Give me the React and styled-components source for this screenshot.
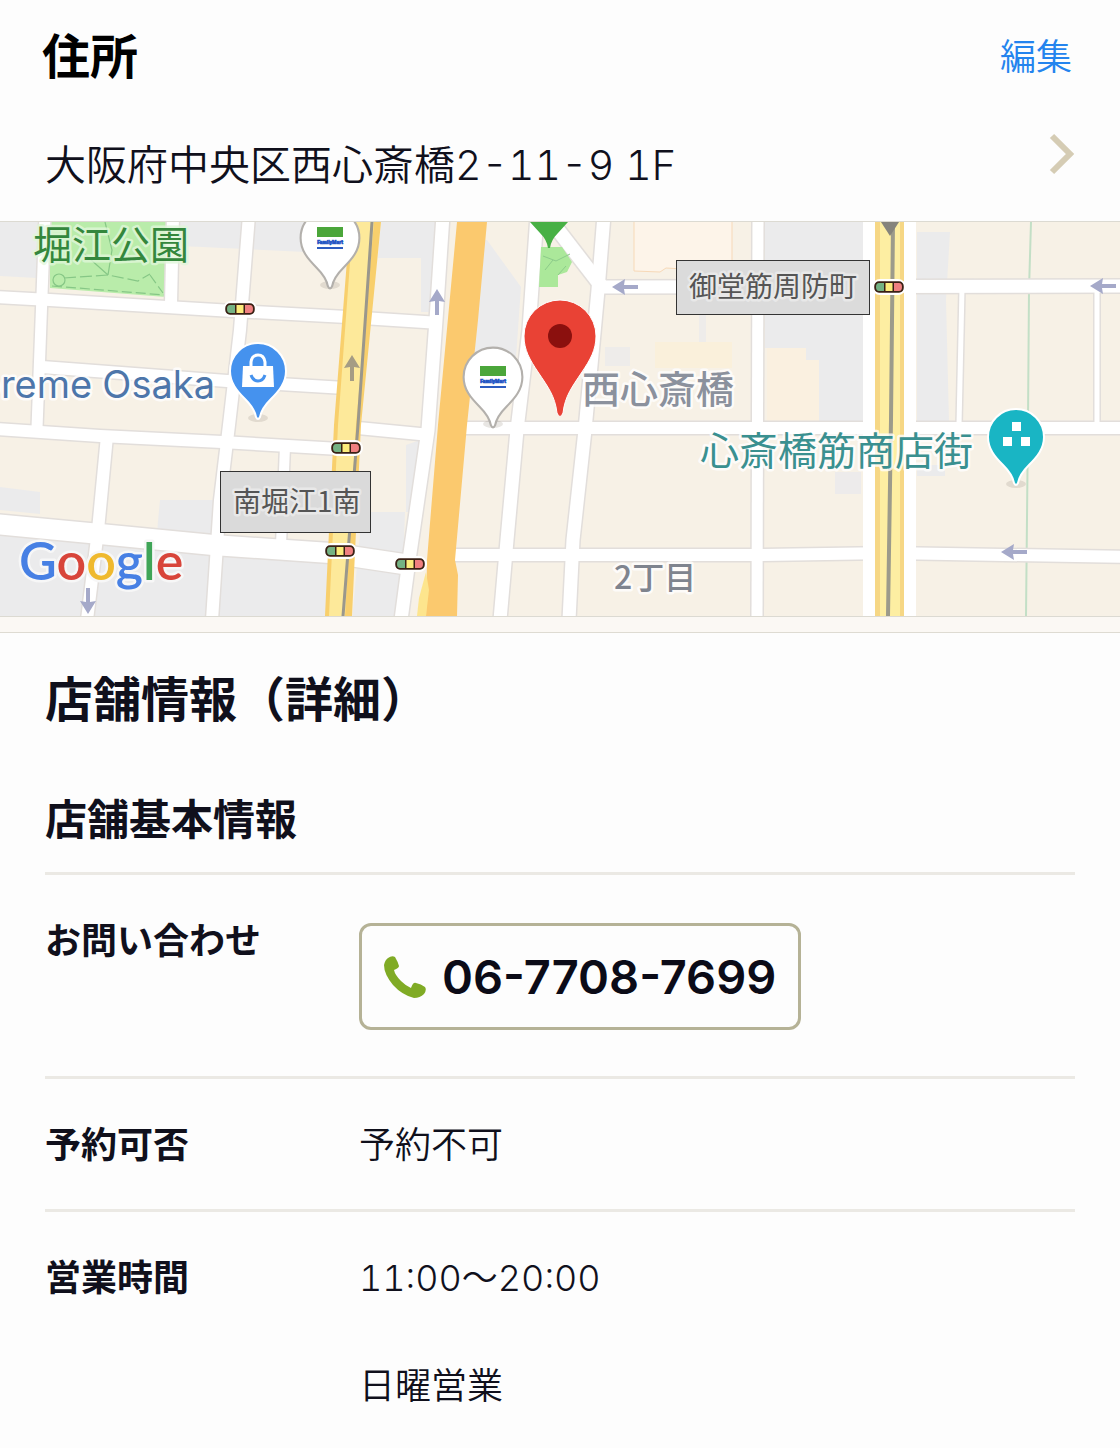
import React from "react";
import styled, { createGlobalStyle } from "styled-components";

const Global = createGlobalStyle`
  *, *::before, *::after { box-sizing: border-box; }
  body {
    margin: 0;
    background: #fdfdfd;
    color: #10101c;
    font-family: Inter, "Noto Sans CJK JP", sans-serif;
    font-size: 36px;
    line-height: 54px;
    font-weight: 350;
    font-variant-numeric: tabular-nums;
  }
`;

const Header = styled.header`
  display: flex;
  align-items: center;
  justify-content: space-between;
  padding: 30px 48px 0 42px;
`;

const Title = styled.h1`
  margin: 0;
  font-size: 48px;
  line-height: 54px;
  font-weight: 700;
  color: #000;
`;

const EditLink = styled.a`
  color: #2484ee;
  text-decoration: none;
`;

const AddressLink = styled.a`
  display: flex;
  align-items: center;
  justify-content: space-between;
  padding: 49px 44px 24px 45px;
  color: inherit;
  text-decoration: none;
  font-size: 41px;
  line-height: 64px;

  svg {
    flex: none;
    margin-bottom: 22px;
  }
`;

const MapFrame = styled.section`
  border-top: 1px solid #dcdad2;
  border-bottom: 1px solid #dcdad2;
`;

const MapSvg = styled.svg`
  display: block;
  width: 100%;
  height: auto;
  font-family: "Noto Sans CJK JP", sans-serif;
`;

const MapLabel = styled.text`
  font-family: ${(p) => p.$font || "inherit"};
  font-size: ${(p) => p.$size || 28}px;
  font-weight: ${(p) => p.$weight || 400};
  fill: ${(p) => p.$color};
  stroke: ${(p) => p.$halo || "rgba(255, 255, 255, 0.8)"};
  stroke-width: 5px;
  stroke-linejoin: round;
  paint-order: stroke;
`;

const Divider = styled.div`
  height: 16px;
  background: #fbf8f4;
  border-bottom: 1px solid #dedbd2;
`;

const Details = styled.main`
  padding: 35px 45px 34px;
`;

const SectionTitle = styled.h2`
  margin: 0;
  font-size: 48px;
  line-height: 64px;
  font-weight: 700;
`;

const GroupTitle = styled.h3`
  margin: 0;
  padding: 56px 0 20px;
  font-size: 42px;
  line-height: 64px;
  font-weight: 700;
`;

const InfoTable = styled.table`
  width: 100%;
  border-collapse: collapse;
  table-layout: fixed;
`;

const InfoRow = styled.tr`
  border-top: 3px solid #ebe9e4;
`;

const InfoLabel = styled.th`
  width: 314px;
  padding: 39px 0 37px;
  vertical-align: top;
  text-align: left;
  font-weight: 700;
`;

const InfoValue = styled.td`
  padding: 39px 0 37px;
  vertical-align: top;
`;

const Line = styled.p`
  margin: 0 0 54px;

  &:last-child {
    margin-bottom: 0;
  }
`;

const PhoneLink = styled.a`
  display: flex;
  align-items: center;
  gap: 16px;
  width: fit-content;
  height: 107px;
  margin: 9px 0;
  padding: 0 22px;
  border: 3px solid #b5b296;
  border-radius: 12px;
  color: #0b0b17;
  text-decoration: none;
  font-size: 47px;
  line-height: 64px;
  font-weight: 600;
  font-variant-numeric: normal;
`;

const roads = [
  ["M45 215 L37 428", 11],
  ["M173 215 L171 304", 12],
  ["M249 215 L240 330 L229 425 L220 500 L212 620", 12],
  ["M-5 297 L50 300 L233 311 L347 317 L440 323", 12],
  ["M42 367 L227 381 L345 388", 12],
  ["M-5 429 L100 436 L222 442 L340 449", 12],
  ["M358 428 L430 435", 12],
  ["M107 436 L98 530 L87 620", 12],
  ["M285 446 L281 545", 10],
  ["M-5 524 L100 534 L213 545 L330 553 L410 565", 20],
  ["M443 215 L436 320 L428 430 L409 560 L401 620", 13],
  ["M537 215 L529 330 L517 430 L507 540 L500 620", 13],
  ["M604 215 L598 290 L585 430 L573 540 L569 620", 13],
  ["M548 217 L602 287", 14],
  ["M600 287 L1130 286", 13],
  ["M462 428 L1130 428", 12],
  ["M452 555 L760 555 L890 553 L1130 557", 12],
  ["M758 215 L757 620", 11],
  ["M962 288 L959 425", 5],
  ["M1097 288 L1097 425", 5],
];

function Roads() {
  return (
    <g fill="none">
      {roads.map(([d, w]) => (
        <path key={"e" + d} d={d} stroke="#e2dedb" strokeWidth={w + 3} />
      ))}
      {roads.map(([d, w]) => (
        <path key={d} d={d} stroke="#fff" strokeWidth={w} />
      ))}
    </g>
  );
}

const PIN =
  "M-28 0 A28 28 0 0 1 28 0 C28 12 21 20 13 28 C6 35 3 40 2 46 Q0 50 -2 46 C-3 40 -6 35 -13 28 C-21 20 -28 12 -28 0 Z";

function Pin({ x, y, fill, edge = "#fff", scale = 1, children }) {
  return (
    <g transform={`translate(${x} ${y})`}>
      <ellipse cx="0" cy="47" rx="10" ry="4" fill="#8a8071" opacity="0.2" />
      <path d={PIN} transform={`scale(${scale})`} fill={fill} stroke={edge} strokeWidth="2" />
      {children}
    </g>
  );
}

function StorePin({ x, y }) {
  return (
    <Pin x={x} y={y} fill="#fff" edge="#b3b0ac" scale={1.05}>
      <rect x="-13" y="-11" width="26" height="10" fill="#4ba63a" />
      <text
        x="0"
        y="6"
        textAnchor="middle"
        fontFamily="Roboto, sans-serif"
        fontSize="5"
        fontWeight="900"
        fill="#2456c4"
        stroke="#2456c4"
        strokeWidth="0.6"
      >
        FamilyMart
      </text>
      <rect x="-13" y="9" width="26" height="2" fill="#2d5cc0" />
    </Pin>
  );
}

function Signal({ x, y }) {
  return (
    <g transform={`translate(${x} ${y})`}>
      <rect x="-17" y="-8" width="34" height="16" rx="8" fill="#fff" />
      <rect x="-14" y="-5" width="28" height="10" rx="4" fill="#3a2114" stroke="#3a2114" strokeWidth="1.5" />
      <path d="M-5 -4 H-10 Q-13 -4 -13 0 Q-13 4 -10 4 H-5 Z" fill="#74b283" />
      <rect x="-3.5" y="-4" width="7" height="8" fill="#fcec7c" />
      <path d="M5 -4 H10 Q13 -4 13 0 Q13 4 10 4 H5 Z" fill="#f08080" />
    </g>
  );
}

function Arrow({ x, y, turn = 0, color = "#a5a9c9" }) {
  return (
    <path
      transform={`translate(${x} ${y}) rotate(${turn})`}
      d="M-13 0 L0 -8 L-1 -2 H13 V2 H-1 L0 8 Z"
      fill={color}
    />
  );
}

function AreaMap() {
  return (
    <MapSvg viewBox="0 222 1120 394" role="img" aria-label="地図">
      <rect x="0" y="222" width="1120" height="394" fill="#f7f1e6" />

      <g fill="#ebebec">
        <path d="M0 222 H40 L37 278 L0 276 Z" />
        <path d="M180 222 H350 L348 254 L180 246 Z" />
        <path d="M381 222 H437 L430 312 L421 312 V258 H378 Z" />
        <path d="M487 240 L521 287 L513 400 L470 352 L477 240 Z" />
        <path d="M765 222 H863 V422 H819 V360 H806 V348 H765 Z" />
        <path d="M917 232 H950 L946 300 L949 422 H917 Z" />
        <path d="M0 487 L40 492 V514 L0 510 Z" />
        <path d="M160 500 L215 500 L212 536 L157 532 Z" />
        <path d="M362 512 H405 L401 620 H352 Z" />
        <path d="M0 530 L212 550 L330 558 V620 H0 Z" />
        <path d="M406 445 L420 440 L410 512 H406 Z" />
        <path d="M835 472 H861 V494 H835 Z" fill="#edebeb" />
        <path d="M917 465 H945 V476 H917 Z" />
        <path d="M605 347 H630 V366 H605 Z" fill="#eeecea" />
        <path d="M699 315 H706 V342 H699 Z" fill="#eeecea" />
      </g>
      <path d="M655 342 H732 V368 H655 Z" fill="#faf0db" />
      <path d="M767 348 H806 V360 H819 V422 H767 Z" fill="#faf0e0" />
      <path d="M634 218 H732 V272 L666 268 L660 272 L634 271 Z" fill="#fdf4e9" stroke="#f7d9b8" />

      <path d="M50 222 H167 L166 297 L50 288 Z" fill="#b9ecaa" />
      <g fill="none" stroke="#86c786" strokeWidth="1.2">
        <circle cx="59" cy="280" r="6" />
        <path d="M64 278 L108 275 L138 281 L150 274" strokeDasharray="12 4" />
        <path d="M108 275 L112 250 L105 222 M108 275 L80 250" />
        <path d="M52 286 L165 295 M150 275 L163 293" strokeDasharray="10 4" />
      </g>

      <path d="M1031 222 L1029 290 L1028 420 L1026 616" stroke="#c3dfc6" strokeWidth="2" fill="none" />

      <Roads />

      <path d="M541 247 L562 247 L572 262 L567 272 L558 275 V287 H539 Z" fill="#abe89a" />
      <path d="M543 256 L556 261 L570 254 M545 270 L553 260 M558 275 L566 266" stroke="#8ccb8a" fill="none" />

      <path d="M457 222 H487 L478 320 L467 425 L455 560 L458 575 L457 616 H426 L427 560 L438 425 Z" fill="#fbc96e" />
      <path d="M419 598 L426 572 L429 590 L426 616 H417 Z" fill="#fde58d" />

      <path d="M350 222 H381 L361 425 L352 616 H325 L334 425 Z" fill="#f8cf6c" />
      <path d="M353 222 H374 L356 425 L345 616 H329 L338 425 Z" fill="#fde99a" />
      <path d="M372 222 L358 425 L343 616" stroke="#9a978c" strokeWidth="3" fill="none" />

      <rect x="863" y="222" width="53" height="394" fill="#fff" />
      <path d="M875 222 H904 V616 H875 Z" fill="#f6d785" />
      <path d="M880 222 H900 V616 H880 Z" fill="#fdeea2" />
      <path d="M893 222 L891 420 L888 616" stroke="#9c9b8b" strokeWidth="4" fill="none" />
      <path d="M881 222 H899 L890 236 Z" fill="#85847c" />

      <Arrow x={437} y={302} turn={90} />
      <Arrow x={352} y={368} turn={90} color="#a59c84" />
      <Arrow x={625} y={287} />
      <Arrow x={1103} y={286} />
      <Arrow x={1014} y={552} />
      <Arrow x={88} y={601} turn={-90} />

      <Signal x={240} y={309} />
      <Signal x={889} y={287} />
      <Signal x={346} y={448} />
      <Signal x={340} y={551} />
      <Signal x={410} y={564} />

      <path d="M530 222 H568 L558 233 Q551 240 550 248 H548 Q547 240 540 233 Z" fill="#48b045" />

      <StorePin x={330} y={238} />
      <StorePin x={493} y={377} />

      <Pin x={258} y={371} fill="#4592ee">
        <path d="M-15 -5 H15 L16 16 H-16 Z" fill="#fff" />
        <path d="M-7 -4 V-9 Q-6 -16 0 -16 Q6 -16 7 -9 V-4" fill="none" stroke="#fff" strokeWidth="3" />
        <path d="M-7 4 Q-5 10 0 10 Q5 10 7 4" fill="none" stroke="#4592ee" strokeWidth="3" />
      </Pin>

      <Pin x={1016} y={437} fill="#19b5c4">
        <path d="M-4 -15 H5 V-6 H-4 Z M-13 0 H-4 V9 H-13 Z M5 0 H14 V9 H5 Z" fill="#fff" />
      </Pin>

      <MapLabel x="33" y="259" $size={39} $color="#34873c" $halo="rgba(225, 247, 218, 0.8)">堀江公園</MapLabel>
      <MapLabel x="215" y="398" textAnchor="end" $font="Inter, sans-serif" $size={38} $color="#4d76aa">preme Osaka</MapLabel>
      <MapLabel x="582" y="403" $size={38} $weight={500} $color="#8b919d">西心斎橋</MapLabel>
      <MapLabel x="700" y="465" $size={39} $color="#3a9090">心斎橋筋商店街</MapLabel>
      <MapLabel x="614" y="589" $size={32} $weight={500} $color="#7f848e">2丁目</MapLabel>

      <rect x="676.5" y="260.5" width="193" height="54" fill="#dbdbdb" stroke="#333" />
      <MapLabel x="689" y="297" $color="#555" $halo="#e8e8e8">御堂筋周防町</MapLabel>
      <rect x="220.5" y="471.5" width="150" height="61" fill="#dadada" stroke="#333" />
      <MapLabel x="233" y="512" $color="#555" $halo="#e8e8e8">南堀江1南</MapLabel>

      <g transform="translate(560 336)">
        <path
          d="M-36 0 A36 36 0 0 1 36 0 C36 14 30 24 22 36 C12 51 5 60 3 77 Q0 84 -3 77 C-5 60 -12 51 -22 36 C-30 24 -36 14 -36 0 Z"
          fill="#e94235"
          stroke="#fff"
          strokeWidth="1"
        />
        <circle r="12" fill="#8b100e" />
      </g>

      <MapLabel x="19" y="580" $font="Lato, sans-serif" $size={52} $weight={600} $color="#4780e4" $halo="#f7f7f7">
        G<tspan fill="#d8453a">o</tspan>
        <tspan fill="#efb92e">o</tspan>
        <tspan fill="#4780e4">g</tspan>
        <tspan fill="#3fa557">l</tspan>
        <tspan fill="#d8453a">e</tspan>
      </MapLabel>
    </MapSvg>
  );
}

export default function App() {
  return (
    <>
      <Global />
      <Header>
        <Title>住所</Title>
        <EditLink href="#edit">編集</EditLink>
      </Header>
      <AddressLink href="#map">
        大阪府中央区西心斎橋2-11-9 1F
        <svg width="28" height="42" viewBox="0 0 28 42" aria-hidden="true">
          <path d="M4 3 L22 21 L4 39" fill="none" stroke="#d5ccb4" strokeWidth="6" />
        </svg>
      </AddressLink>
      <MapFrame id="map">
        <AreaMap />
      </MapFrame>
      <Divider />
      <Details>
        <SectionTitle>店舗情報（詳細）</SectionTitle>
        <GroupTitle id="basic">店舗基本情報</GroupTitle>
        <InfoTable aria-labelledby="basic">
          <tbody>
            <InfoRow>
              <InfoLabel scope="row">お問い合わせ</InfoLabel>
              <InfoValue>
                <PhoneLink href="tel:0677087699">
                  <svg width="42" height="42" viewBox="0 0 42 42" aria-hidden="true">
                    <path
                      d="M4 2 Q8 -1 11 1 Q14 6 15 10 Q15 12 10 14 Q11 19 17 25 Q22 30 27 32 Q29 26 32 27 Q37 28 41 31 Q43 34 40 38 Q36 42 30 42 Q18 39 9 29 Q0 18 0 9 Q1 4 4 2 Z"
                      fill="#80ab25"
                    />
                  </svg>
                  06-7708-7699
                </PhoneLink>
              </InfoValue>
            </InfoRow>
            <InfoRow>
              <InfoLabel scope="row">予約可否</InfoLabel>
              <InfoValue>予約不可</InfoValue>
            </InfoRow>
            <InfoRow>
              <InfoLabel scope="row">営業時間</InfoLabel>
              <InfoValue>
                <Line>11:00〜20:00</Line>
                <Line>日曜営業</Line>
              </InfoValue>
            </InfoRow>
          </tbody>
        </InfoTable>
      </Details>
    </>
  );
}
